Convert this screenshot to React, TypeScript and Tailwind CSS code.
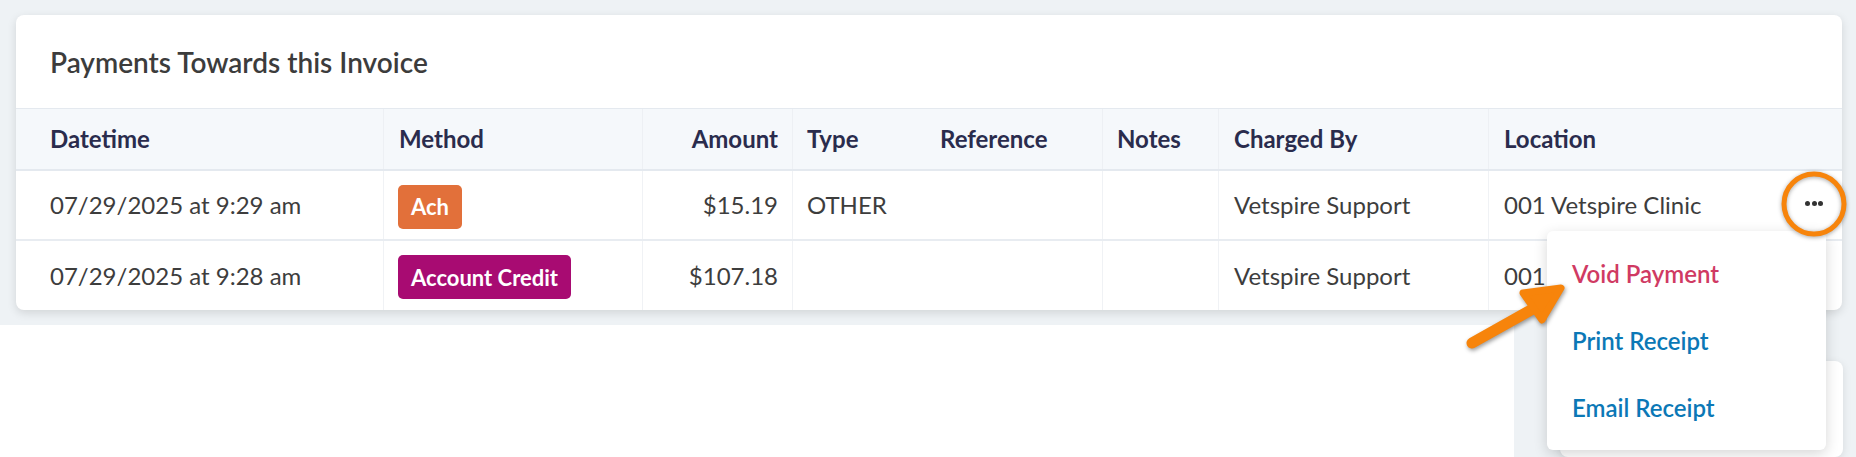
import React from 'react';

const cols = 'grid grid-cols-[368px_259px_150px_132px_178px_116px_270px_353px]';

type Row = {
  datetime: string;
  method: string;
  methodColor: string;
  amount: string;
  type: string;
  chargedBy: string;
  location: string;
  actions?: boolean;
};

const rows: Row[] = [
  {
    datetime: '07/29/2025 at 9:29 am',
    method: 'Ach',
    methodColor: 'bg-[#e2703a]',
    amount: '$15.19',
    type: 'OTHER',
    chargedBy: 'Vetspire Support',
    location: '001 Vetspire Clinic',
    actions: true,
  },
  {
    datetime: '07/29/2025 at 9:28 am',
    method: 'Account Credit',
    methodColor: 'bg-[#a80b72]',
    amount: '$107.18',
    type: '',
    chargedBy: 'Vetspire Support',
    location: '001 Vetspire Clinic',
  },
];

function MoreButton() {
  return (
    <div className="relative w-[32px] h-[32px] flex items-center justify-center gap-[1.5px] mb-[3px]">
      <span className="w-[5px] h-[5px] rounded-full bg-[#333]" />
      <span className="w-[5px] h-[5px] rounded-full bg-[#333]" />
      <span className="w-[5px] h-[5px] rounded-full bg-[#333]" />
      {/* annotation ring */}
      <span className="absolute z-20 left-1/2 top-1/2 -translate-x-1/2 -translate-y-1/2 w-[65px] h-[65px] rounded-full border-[5px] border-[#f7840b] drop-shadow-[0_1px_2px_rgba(0,0,0,0.35)]" />
    </div>
  );
}

export default function App() {
  return (
    <div
      className="w-[1856px] h-[457px] flex flex-col bg-white overflow-hidden"
      style={{ fontFamily: 'Lato, "Noto Sans", sans-serif' }}
    >
      <div className="bg-[#eef2f5] pt-[15px] pb-[15px] pl-[16px] pr-[14px]">
        <div className="relative bg-white rounded-lg shadow-[0_3px_10px_rgba(0,0,0,0.12)]">
          <div className="h-[93px] flex items-center px-[34px]">
            <h2 className="text-[28px] font-semibold text-[#3c3c3c]">Payments Towards this Invoice</h2>
          </div>

          {/* header */}
          <div className={`${cols} h-[63px] bg-[#f5f8fb] border-t border-b-2 border-[#e4e9ef] text-[24px] font-bold text-[#2a2c4d]`}>
            <div className="flex items-center pl-[34px] border-r border-[#edf0f4]">Datetime</div>
            <div className="flex items-center pl-[15px] border-r border-[#edf0f4]">Method</div>
            <div className="flex items-center justify-end pr-[14px] border-r border-[#edf0f4]">Amount</div>
            <div className="flex items-center pl-[14px]">Type</div>
            <div className="flex items-center pl-[15px] border-r border-[#edf0f4]">Reference</div>
            <div className="flex items-center pl-[14px] border-r border-[#edf0f4]">Notes</div>
            <div className="flex items-center pl-[15px] border-r border-[#edf0f4]">Charged By</div>
            <div className="flex items-center pl-[15px]">Location</div>
          </div>

          {rows.map((r, i) => (
            <div
              key={i}
              className={`${cols} ${i === 0 ? 'h-[70px] border-b-2 border-[#e8ecf1]' : 'h-[69px]'} text-[24px] text-[#3d3d3d]`}
            >
              <div className="flex items-center pl-[34px] border-r border-[#f0f2f5]">{r.datetime}</div>
              <div className="flex items-center pl-[14px] border-r border-[#f0f2f5]">
                <span className={`inline-flex items-center h-[44px] px-[13px] rounded-[5px] text-white text-[22px] font-bold mt-[3px] ${r.methodColor}`}>
                  {r.method}
                </span>
              </div>
              <div className="flex items-center justify-end pr-[14px] border-r border-[#f0f2f5]">{r.amount}</div>
              <div className="flex items-center pl-[14px]">{r.type}</div>
              <div className="flex items-center border-r border-[#f0f2f5]" />
              <div className="flex items-center border-r border-[#f0f2f5]" />
              <div className="flex items-center pl-[15px] border-r border-[#f0f2f5]">{r.chargedBy}</div>
              <div className="flex items-center justify-between pl-[15px] pr-[12px]">
                <span>{r.location}</span>
                {r.actions && <MoreButton />}
              </div>
            </div>
          ))}

          {/* open row menu */}
          <div className="absolute z-10 right-[16px] top-[216px] w-[279px] bg-white rounded-[6px] shadow-[0_4px_14px_rgba(0,0,0,0.16)] py-[9px]">
            <div className="h-[67px] flex items-center px-[25px] text-[24px] font-semibold text-[#d03a63]">Void Payment</div>
            <div className="h-[67px] flex items-center px-[25px] text-[24px] font-semibold text-[#0b78b6]">Print Receipt</div>
            <div className="h-[67px] flex items-center px-[25px] text-[24px] font-semibold text-[#0b78b6]">Email Receipt</div>
          </div>

          {/* annotation arrow */}
          <svg
            className="absolute z-20 left-[1439px] top-[257px] drop-shadow-[1px_2px_2px_rgba(0,0,0,0.4)]"
            width="125"
            height="88"
            viewBox="0 0 125 88"
          >
            <line x1="17" y1="71" x2="92" y2="29" stroke="#f7840b" strokeWidth="11" strokeLinecap="round" />
            <polygon
              points="106,16 68,21 87,48"
              fill="#f7840b"
              stroke="#f7840b"
              strokeWidth="7"
              strokeLinejoin="round"
            />
          </svg>
        </div>
      </div>

      <div className="flex-1 flex">
        <div className="flex-1 bg-white" />
        <div className="w-[342px] bg-[#eef2f5] pt-[36px] pl-[46px] pr-[13px] flex">
          <div className="flex-1 bg-white rounded-lg shadow-[0_2px_8px_rgba(0,0,0,0.1)]" />
        </div>
      </div>
    </div>
  );
}
